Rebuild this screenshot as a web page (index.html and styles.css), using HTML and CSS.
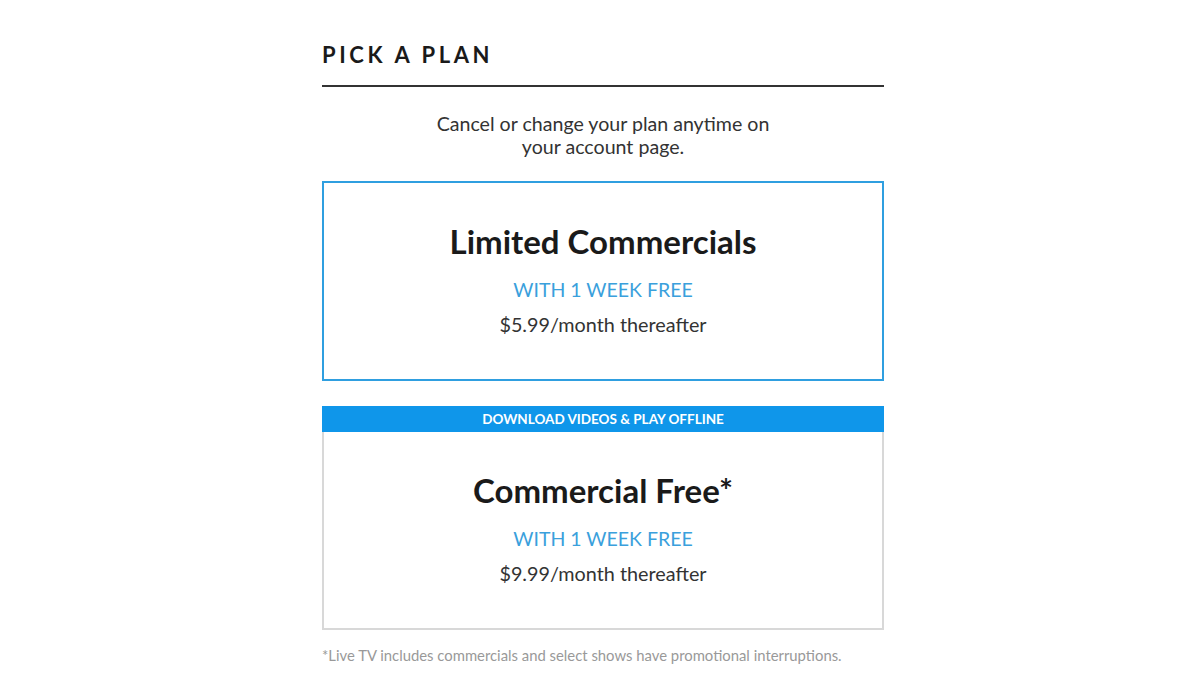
FILE: index.html
```html
<!DOCTYPE html>
<html>
<head>
<meta charset="utf-8">
<link rel="stylesheet" href="styles.css">
</head>
<body>
<main class="page">
  <h1 class="heading">PICK A PLAN</h1>
  <p class="intro">Cancel or change your plan anytime on<br>your account page.</p>
  <section class="plan plan-selected">
    <h2 class="plan-name">Limited Commercials</h2>
    <div class="plan-offer">WITH 1 WEEK FREE</div>
    <div class="plan-price">$5.99/month thereafter</div>
  </section>
  <section class="plan-group">
    <div class="banner">DOWNLOAD VIDEOS &amp; PLAY OFFLINE</div>
    <div class="plan plan-plain">
      <h2 class="plan-name">Commercial Free*</h2>
      <div class="plan-offer">WITH 1 WEEK FREE</div>
      <div class="plan-price">$9.99/month thereafter</div>
    </div>
  </section>
  <p class="footnote">*Live TV includes commercials and select shows have promotional interruptions.</p>
</main>
</body>
</html>
```
FILE: styles.css
```css
* { box-sizing: border-box; }
html, body { margin: 0; padding: 0; background: #fff; }
body { font-family: Lato, "Open Sans", sans-serif; color: #222; }
.page {
  width: 562px;
  margin: 0 0 0 calc(50% - 278px);
  padding-top: 40px;
  display: flex;
  flex-direction: column;
}
.heading {
  margin: 0;
  font-size: 22px;
  font-weight: 700;
  letter-spacing: 3.6px;
  color: #1a1a1a;
  line-height: 30px;
  padding-bottom: 15px;
  border-bottom: 2px solid #333;
}
.intro {
  margin: 25px 0 0;
  text-align: center;
  font-size: 19.6px;
  line-height: 23px;
  color: #333;
}
.plan {
  display: flex;
  flex-direction: column;
  align-items: center;
  text-align: center;
}
.plan-selected {
  margin-top: 23px;
  height: 200px;
  border: 2px solid #2f9fe0;
  padding-top: 38px;
}
.plan-group { margin-top: 25px; }
.banner {
  background: #0f96ea;
  color: #fff;
  font-weight: 700;
  font-size: 13.5px;
  height: 26px;
  line-height: 26px;
  text-align: center;
}
.plan-plain {
  height: 198px;
  border: 2px solid #d8d8d8;
  border-top: none;
  padding-top: 38px;
}
.plan-name {
  margin: 0;
  font-size: 33px;
  font-weight: 700;
  line-height: 40px;
  color: #1a1a1a;
}
.plan-offer {
  margin-top: 17px;
  font-size: 19.5px;
  line-height: 24px;
  color: #3aa0dc;
}
.plan-price {
  margin-top: 10px;
  font-size: 19.8px;
  line-height: 24px;
  color: #333;
}
.footnote {
  margin: 16px 0 0;
  font-size: 14.85px;
  color: #999;
  line-height: 18px;
}
```
